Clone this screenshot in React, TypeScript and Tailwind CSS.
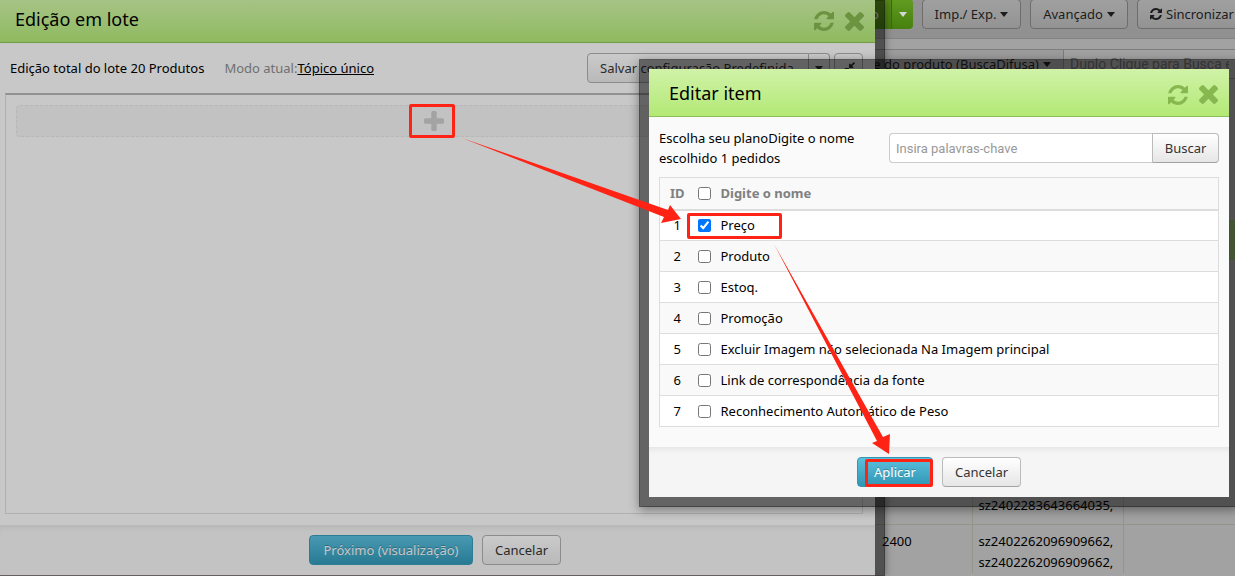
import React from 'react';

const items = [
  { id: 1, name: 'Preço', checked: true },
  { id: 2, name: 'Produto', checked: false },
  { id: 3, name: 'Estoq.', checked: false },
  { id: 4, name: 'Promoção', checked: false },
  { id: 5, name: 'Excluir Imagem não selecionada Na Imagem principal', checked: false },
  { id: 6, name: 'Link de correspondência da fonte', checked: false },
  { id: 7, name: 'Reconhecimento Automático de Peso', checked: false },
];

function RefreshIcon({ className }: { className: string }) {
  return (
    <svg viewBox="128 128 1536 1536" className={className} fill="currentColor" aria-hidden="true">
      <path d="M1639 1056q0 5-1 7-64 268-268 434.5t-478 166.5q-146 0-282.5-55t-243.5-157l-129 129q-19 19-45 19t-45-19-19-45v-448q0-26 19-45t45-19h448q26 0 45 19t19 45-19 45l-137 137q71 66 161 102t187 36q134 0 250-65t186-179q11-17 53-117 8-23 30-23h192q13 0 22.5 9.5t9.5 22.5zm25-800v448q0 26-19 45t-45 19h-448q-26 0-45-19t-19-45 19-45l138-138q-148-137-349-137-134 0-250 65t-186 179q-11 17-53 117-8 23-30 23h-199q-13 0-22.5-9.5t-9.5-22.5v-7q65-268 270-434.5t480-166.5q146 0 284 55.5t245 156.5l130-129q19-19 45-19t45 19 19 45z" />
    </svg>
  );
}

function CloseIcon({ className }: { className: string }) {
  return (
    <svg viewBox="302 366 1188 1188" className={className} fill="currentColor" aria-hidden="true">
      <path d="M1490 1322q0 40-28 68l-136 136q-28 28-68 28t-68-28l-294-294-294 294q-28 28-68 28t-68-28l-136-136q-28-28-28-68t28-68l294-294-294-294q-28-28-28-68t28-68l136-136q28-28 68-28t68 28l294 294 294-294q28-28 68-28t68 28l136 136q28 28 28 68t-28 68l-294 294 294 294q28 28 28 68z" />
    </svg>
  );
}

function PlusIcon({ className }: { className: string }) {
  return (
    <svg viewBox="192 128 1408 1408" className={className} fill="currentColor" aria-hidden="true">
      <path d="M1600 736v192q0 40-28 68t-68 28h-416v416q0 40-28 68t-68 28h-192q-40 0-68-28t-28-68v-416h-416q-40 0-68-28t-28-68v-192q0-40 28-68t68-28h416v-416q0-40 28-68t68-28h192q40 0 68 28t28 68v416h416q40 0 68 28t28 68z" />
    </svg>
  );
}

function CompressIcon({ className }: { className: string }) {
  return (
    <svg viewBox="128 128 1536 1536" className={className} fill="currentColor" aria-hidden="true">
      <path d="M896 960v448q0 26-19 45t-45 19-45-19l-144-144-332 332q-10 10-23 10t-23-10l-114-114q-10-10-10-23t10-23l332-332-144-144q-19-19-19-45t19-45 45-19h448q26 0 45 19t19 45zm755-672q0 13-10 23l-332 332 144 144q19 19 19 45t-19 45-45 19h-448q-26 0-45-19t-19-45v-448q0-26 19-45t45-19 45 19l144 144 332-332q10-10 23-10t23 10l114 114q10 10 10 23z" />
    </svg>
  );
}

function Caret() {
  return (
    <svg viewBox="0 0 8 5" className="h-[5px] w-2 shrink-0" fill="currentColor" aria-hidden="true">
      <path d="M0 0h8L4 5z" />
    </svg>
  );
}

function ProductPage() {
  const button = 'flex h-[30px] shrink-0 items-center justify-center gap-1 rounded border border-[#6d6d6d] bg-linear-to-b from-[#a0a0a0] to-[#939393] text-[#1c1c1c]';

  return (
    <main className="flex min-h-screen justify-end overflow-hidden bg-[#a2a2a2]">
      <div className="w-[435px] shrink-0">
        <div className="flex h-[39px] gap-[9px] border-b border-[#848484] bg-linear-to-b from-[#949494] to-[#909090] whitespace-nowrap">
          <div className="-mt-px flex w-[113px] shrink-0">
            <button className="h-[30px] flex-1 bg-linear-to-b from-[#598d1c] to-[#447c12] pr-3 text-right text-[#d6d6d6]">Produto</button>
            <button className="flex h-[30px] w-[22px] items-center justify-center rounded-r border-l border-[#3c6b10] bg-linear-to-b from-[#629c20] to-[#46800f] text-[#d6d6d6]" aria-label="Mais opções de produto">
              <Caret />
            </button>
          </div>
          <button className={`${button} -mt-px w-[99px]`}>Imp./ Exp. <Caret /></button>
          <button className={`${button} -mt-px w-[98px]`}>Avançado <Caret /></button>
          <button className={`${button} -mt-px px-3`}><RefreshIcon className="size-3" />Sincronizar</button>
        </div>

        <div className="mt-[10px] flex h-[30px]">
          <button className="flex w-[264px] items-center justify-end gap-1 border border-[#7c7c7c] bg-[#9c9c9c] pr-3 whitespace-nowrap text-[#1c1c1c]">
            Nome do produto (BuscaDifusa) <Caret />
          </button>
          <input
            className="min-w-0 flex-1 border-y border-[#7c7c7c] px-[6px] font-[Roboto,sans-serif] text-sm placeholder:text-[#666666]"
            placeholder="Duplo Clique para Busca em massa"
            aria-label="Busca de produto"
          />
        </div>

        <table className="mt-[141px] w-full table-fixed border-collapse text-left leading-[21px]">
          <tbody>
            <tr className="h-10 bg-[#87a967]">
              <td className="w-[172px]" />
              <td className="w-[151px]" />
              <td />
            </tr>
            <tr className="h-[264px] border-b border-[#92958a] align-bottom">
              <td className="border-r border-[#92958a]" />
              <td className="border-r border-[#92958a] px-[6px] pb-2">sz2402283643664035,</td>
              <td />
            </tr>
            <tr className="align-top">
              <td className="border-r border-[#92958a] py-[6px] pl-[82px]">2400</td>
              <td className="border-r border-[#92958a] px-[6px] pt-[6px]">
                sz2402262096909662,
                <br />
                sz2402262096909662,
              </td>
              <td />
            </tr>
          </tbody>
        </table>
      </div>
    </main>
  );
}

function BatchDialog() {
  const button = 'h-[30px] border border-[#8c8c8c] bg-linear-to-b from-[#cacaca] to-[#b9b9b9] text-[#292929]';

  return (
    <section
      aria-label="Edição em lote"
      className="absolute inset-y-0 right-[350px] left-0 flex flex-col border-r-10 border-black/50 bg-[#c8c8c8] bg-clip-padding shadow-[0_0_8px_rgba(0,0,0,0.4)]"
    >
      <header className="flex h-[43px] shrink-0 items-center justify-between border-b border-[#719c48] bg-linear-to-b from-[#a6c385] to-[#8fba5f] pr-[11px] pl-[15px]">
        <h1 className="pb-1 text-lg leading-6">Edição em lote</h1>
        <div className="flex items-center gap-[11px] text-[#6c9440]">
          <button aria-label="Atualizar"><RefreshIcon className="size-5" /></button>
          <button aria-label="Fechar"><CloseIcon className="size-[19px]" /></button>
        </div>
      </header>

      <div className="flex items-center justify-between py-[10px] pr-3 pl-[10px] whitespace-nowrap">
        <p>
          Edição total do lote 20 Produtos
          <span className="ml-5 text-[#707070]">Modo atual:</span>
          <a href="#modo" className="underline">Tópico único</a>
        </p>
        <div className="flex">
          <button className={`${button} w-[222px] rounded-l px-3 text-left`}>Salvar configuração Predefinida</button>
          <button className={`${button} flex w-[21px] items-center justify-center rounded-r border-l-0`} aria-label="Mais configurações">
            <Caret />
          </button>
          <button className={`${button} ml-1 flex w-[29px] items-center justify-center rounded`} aria-label="Reduzir">
            <CompressIcon className="size-3" />
          </button>
        </div>
      </div>

      <div className="mr-3 mb-[11px] ml-[5px] flex-1 border border-t-2 border-[#b0b0b0] border-t-[#919191] p-[10px]">
        <div className="flex h-8 items-center justify-center rounded border border-dashed border-[#b7b7b7] bg-[#c2c2c2]">
          <button className="relative flex h-8 w-[50px] items-center justify-center text-[#a3a3a3]" aria-label="Adicionar item">
            <PlusIcon className="size-5" />
            <span className="absolute -inset-y-px right-1 left-0 rounded-xs border-3 border-[#ff2316]" />
          </button>
        </div>
      </div>

      <footer className="flex h-[51px] shrink-0 items-center justify-center gap-[9px] border-b border-[#665f5f] bg-[#c3c3c3] pr-[5px] shadow-[inset_0_6px_6px_-4px_rgba(0,0,0,0.08)]">
        <button className="h-[30px] w-[164px] rounded border border-[#2b7c95] bg-linear-to-b from-[#4899b1] to-[#277a93] whitespace-nowrap text-[#c8c8c8] text-shadow-[0_-1px_0_rgba(0,0,0,0.25)]">
          Próximo (visualização)
        </button>
        <button className={`${button} w-[79px] rounded`}>Cancelar</button>
      </footer>
    </section>
  );
}

function EditItemDialog() {
  const button = 'h-[30px] border border-[#bbbbbb] border-b-[#a2a2a2] bg-linear-to-b from-white to-[#e6e6e6] text-[#333333]';

  return (
    <section
      aria-label="Editar item"
      className="absolute top-[59px] right-[-4px] w-[600px] border-10 border-black/50 bg-[#fafafa] bg-clip-padding shadow-[0_3px_10px_rgba(0,0,0,0.4)]"
    >
      <header className="flex h-12 items-center justify-between border-b border-[#8cc05a] bg-linear-to-b from-[#d0f2a7] to-[#b3e975] pr-[11px] pl-5">
        <h2 className="text-lg leading-6">Editar item</h2>
        <div className="flex items-center gap-[11px] pt-1 text-[#86b84f]">
          <button aria-label="Atualizar"><RefreshIcon className="size-5" /></button>
          <button aria-label="Fechar"><CloseIcon className="size-[19px]" /></button>
        </div>
      </header>

      <div className="px-[10px] pt-[11px] pb-5">
        <div className="flex items-center">
          <p className="w-[230px] pr-5 leading-5">Escolha seu planoDigite o nome escolhido 1 pedidos</p>
          <input
            className="h-[30px] min-w-0 flex-1 rounded-l border border-r-0 border-[#cccccc] bg-white px-[6px] font-[Roboto,sans-serif] text-[13px] placeholder:text-[#999999]"
            placeholder="Insira palavras-chave"
            aria-label="Insira palavras-chave"
          />
          <button className={`${button} w-[67px] rounded-r`}>Buscar</button>
        </div>

        <table className="mt-[9px] w-full border-collapse border border-[#dddddd] text-left">
          <thead>
            <tr className="h-8 border-b-2 border-[#dddddd] bg-[#f9f9f9] text-[#808080]">
              <th className="w-[35px] text-center">ID</th>
              <th className="w-5 pl-[3px]">
                <input type="checkbox" className="block size-[13px]" aria-label="Selecionar todos" />
              </th>
              <th className="pl-[6px]">Digite o nome</th>
            </tr>
          </thead>
          <tbody>
            {items.map((item) => (
              <tr key={item.id} className="h-[31px] border-b border-[#dddddd] odd:bg-white even:bg-[#f9f9f9]">
                <td className="text-center">{item.id}</td>
                <td className="relative pl-[3px]">
                  <input type="checkbox" id={`item-${item.id}`} defaultChecked={item.checked} className="block size-[13px]" />
                  {item.checked && (
                    <span className="pointer-events-none absolute top-[2px] -left-2 h-[26px] w-[95px] rounded-xs border-3 border-[#ff2316]" />
                  )}
                </td>
                <td className="pl-[6px]">
                  <label htmlFor={`item-${item.id}`}>{item.name}</label>
                </td>
              </tr>
            ))}
          </tbody>
        </table>
      </div>

      <footer className="flex h-[50px] items-center justify-center gap-[9px] bg-[#f5f5f5] shadow-[inset_0_6px_6px_-4px_rgba(0,0,0,0.08)]">
        <button className="relative h-[30px] w-[76px] rounded border border-[#2f96b4] bg-linear-to-b from-[#5bc0de] to-[#2f96b4] text-white text-shadow-[0_-1px_0_rgba(0,0,0,0.25)]">
          Aplicar
          <span className="absolute top-px -right-px h-7 w-[68px] rounded-xs border-3 border-[#ff2316]" />
        </button>
        <button className={`${button} w-[79px] rounded`}>Cancelar</button>
      </footer>
    </section>
  );
}

// Tutorial arrows drawn over both dialogs
function Arrows() {
  return (
    <svg viewBox="455 130 440 330" className="pointer-events-none absolute top-[130px] right-[340px] h-[330px] w-[440px]" fill="#ff2316" aria-hidden="true">
      <path d="M462 138L668 210L670 205L681 219L661 223L664 217Z" />
      <path d="M774 244L883 437L890 434L889 454L872 443L877 441Z" />
    </svg>
  );
}

export default function App() {
  return (
    <div className="relative min-h-screen overflow-hidden font-['Noto_Sans','Open_Sans',sans-serif] text-[13px] leading-5 text-black">
      <ProductPage />
      <BatchDialog />
      <EditItemDialog />
      <Arrows />
    </div>
  );
}
